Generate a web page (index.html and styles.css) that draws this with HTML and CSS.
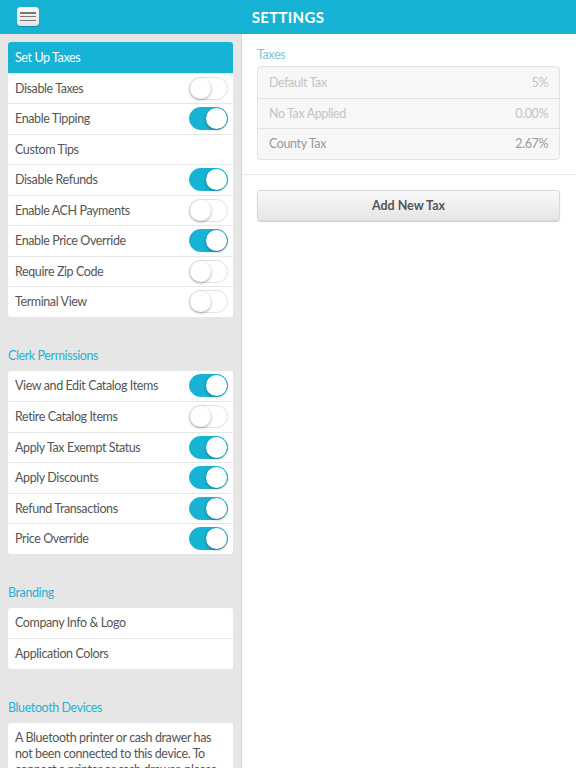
FILE: index.html
```html
<!DOCTYPE html>
<html lang="en">
<head>
    <meta charset="UTF-8" />
    <meta name="viewport" content="width=device-width, initial-scale=1.0"/>
    <title>Settings</title>
    <link rel="stylesheet" href="styles.css">
</head>
<body>

<!-- Header -->
<header class="topbar">
    <button class="menu-btn" aria-label="Menu">
        <span></span><span></span><span></span>
    </button>
    <h1>SETTINGS</h1>
</header>

<div class="layout">
    <!-- Sidebar -->
    <aside class="sidebar">
        <ul class="card">
            <li class="row active">Set Up Taxes</li>
            <li class="row">Disable Taxes <span class="toggle"></span></li>
            <li class="row">Enable Tipping <span class="toggle on"></span></li>
            <li class="row">Custom Tips</li>
            <li class="row">Disable Refunds <span class="toggle on"></span></li>
            <li class="row">Enable ACH Payments <span class="toggle"></span></li>
            <li class="row">Enable Price Override <span class="toggle on"></span></li>
            <li class="row">Require Zip Code <span class="toggle"></span></li>
            <li class="row">Terminal View <span class="toggle"></span></li>
        </ul>

        <h3 class="group-label">Clerk Permissions</h3>
        <ul class="card">
            <li class="row">View and Edit Catalog Items <span class="toggle on"></span></li>
            <li class="row">Retire Catalog Items <span class="toggle"></span></li>
            <li class="row">Apply Tax Exempt Status <span class="toggle on"></span></li>
            <li class="row">Apply Discounts <span class="toggle on"></span></li>
            <li class="row">Refund Transactions <span class="toggle on"></span></li>
            <li class="row">Price Override <span class="toggle on"></span></li>
        </ul>

        <h3 class="group-label">Branding</h3>
        <ul class="card">
            <li class="row">Company Info &amp; Logo</li>
            <li class="row">Application Colors</li>
        </ul>

        <h3 class="group-label">Bluetooth Devices</h3>
        <div class="card note">
            A Bluetooth printer or cash drawer has not been connected to this device. To connect a printer or cash drawer, please open the device settings and pair it.
        </div>
    </aside>

    <!-- Taxes -->
    <main class="content">
        <div class="tax-block">
            <h3 class="tax-label">Taxes</h3>
            <ul class="tax-list">
                <li class="tax-row muted"><span>Default Tax</span><span>5%</span></li>
                <li class="tax-row muted"><span>No Tax Applied</span><span>0.00%</span></li>
                <li class="tax-row"><span>County Tax</span><span>2.67%</span></li>
            </ul>
        </div>
        <div class="actions">
            <button class="add-btn">Add New Tax</button>
        </div>
    </main>
</div>

</body>
</html>
```

FILE: styles.css
```css
body {
    font-family: Lato, "Open Sans", sans-serif;
    margin: 0;
    padding: 0;
    height: 768px;
    overflow: hidden;
    color: #555;
    background: #fff;
}

ul {
    list-style: none;
    margin: 0;
    padding: 0;
}

/* Header */
.topbar {
    height: 34px;
    background: #16b3d4;
    display: flex;
    align-items: center;
    justify-content: center;
    position: relative;
}

.topbar h1 {
    margin: 0;
    color: #fff;
    font-size: 15px;
    font-weight: 700;
    letter-spacing: 0.3px;
}

.menu-btn {
    position: absolute;
    left: 17px;
    top: 7px;
    width: 22px;
    height: 19px;
    border: none;
    border-radius: 4px;
    background: linear-gradient(to bottom, #fafafa, #e4e4e4);
    box-shadow: 0 1px 1px rgba(0, 0, 0, 0.25);
    padding: 5px 3px;
    display: flex;
    flex-direction: column;
    justify-content: space-between;
}

.menu-btn span {
    display: block;
    height: 1.5px;
    background: #777;
}

/* Layout */
.layout {
    display: flex;
    height: 734px;
}

.sidebar {
    width: 225px;
    flex-shrink: 0;
    background: #e6e6e6;
    border-right: 1px solid #d6d6d6;
    padding: 8px 8px 0 8px;
    overflow: hidden;
}

.card {
    background: #fff;
    border-radius: 3px;
    overflow: hidden;
}

.row {
    height: 30.5px;
    box-sizing: border-box;
    display: flex;
    align-items: center;
    justify-content: space-between;
    padding: 0 5px 0 7px;
    font-size: 12.5px;
    letter-spacing: -0.4px;
    border-top: 1px solid #e6e6e6;
}

.row:first-child {
    border-top: none;
}

.row.active {
    background: #16b3d4;
    color: #fff;
}

.group-label {
    margin: 31px 0 7px 0;
    height: 16px;
    line-height: 16px;
    font-size: 12.5px;
    letter-spacing: -0.4px;
    font-weight: 400;
    color: #25b2d2;
}

.note {
    padding: 7px 14px 7px 7px;
    font-size: 12.5px;
    letter-spacing: -0.4px;
    line-height: 16px;
}

/* Toggle switch */
.toggle {
    width: 39px;
    height: 23px;
    box-sizing: border-box;
    border-radius: 12px;
    border: 1px solid #e2e2e2;
    background: #fff;
    position: relative;
    flex-shrink: 0;
}

.toggle::after {
    content: "";
    position: absolute;
    top: 0;
    left: 0;
    width: 21px;
    height: 21px;
    border-radius: 50%;
    background: #fff;
    box-shadow: 0 1px 3px rgba(0, 0, 0, 0.35);
}

.toggle.on {
    background: #16b3d4;
    border-color: #16b3d4;
}

.toggle.on::after {
    left: auto;
    right: 0;
}

/* Content */
.content {
    flex: 1;
}

.tax-block {
    padding: 13px 16px 14px 15px;
    border-bottom: 1px solid #e8e8e8;
}

.tax-label {
    margin: 0 0 3px 0;
    font-size: 12.5px;
    letter-spacing: -0.4px;
    font-weight: 400;
    line-height: 16px;
    color: #6fcbe2;
}

.tax-list {
    background: #f7f7f7;
    border: 1px solid #e2e2e2;
    border-radius: 4px;
}

.tax-row {
    height: 30.5px;
    box-sizing: border-box;
    display: flex;
    align-items: center;
    justify-content: space-between;
    padding: 0 11px;
    font-size: 12.5px;
    letter-spacing: -0.4px;
    color: #999;
    border-top: 1px solid #e2e2e2;
}

.tax-row:first-child {
    border-top: none;
}

.tax-row.muted {
    color: #c4c4c4;
}

.actions {
    padding: 15px 16px 0 15px;
}

.add-btn {
    width: 100%;
    height: 31px;
    border: 1px solid #d9d9d9;
    border-radius: 3px;
    background: linear-gradient(to bottom, #f8f8f8, #e6e6e6);
    box-shadow: 0 1px 1px rgba(0, 0, 0, 0.2);
    font-family: Lato, sans-serif;
    font-size: 12.5px;
    font-weight: 700;
    color: #555;
}
```
